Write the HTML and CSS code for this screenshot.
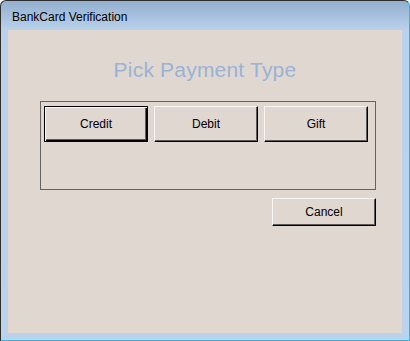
FILE: index.html
```html
<!DOCTYPE html>
<html>
<head>
<meta charset="utf-8">
<link rel="stylesheet" href="styles.css">
</head>
<body>
<div class="window">
  <div class="titlebar">BankCard Verification</div>
  <div class="client">
    <h1 class="heading">Pick Payment Type</h1>
    <div class="column">
      <div class="group">
        <button class="btn default">Credit</button>
        <button class="btn">Debit</button>
        <button class="btn">Gift</button>
      </div>
      <div class="actions">
        <button class="btn cancel">Cancel</button>
      </div>
    </div>
  </div>
</div>
</body>
</html>
```
FILE: styles.css
```css
html, body {
  margin: 0;
  padding: 0;
  background: #ffffff;
}
.window {
  width: 410px;
  height: 341px;
  box-sizing: border-box;
  border: 1px solid #2e2e2e;
  border-right-color: #2fb8de;
  border-bottom-color: #2fb8de;
  border-radius: 6px 6px 0 0;
  background: linear-gradient(to bottom, #93b0cf 0px, #b9d1ea 29px, #bad2eb 100%);
  padding: 0 7px 7px 7px;
  display: flex;
  flex-direction: column;
  font-family: "Liberation Sans", Arial, sans-serif;
}
.titlebar {
  height: 29px;
  box-sizing: border-box;
  padding: 9px 0 0 4px;
  font-size: 12px;
  line-height: 15px;
  color: #000;
}
.client {
  flex: 1;
  background: #dfd7d0;
  display: flex;
  flex-direction: column;
  align-items: center;
}
.heading {
  margin: 28px 0 0 0;
  font-size: 21px;
  line-height: 24px;
  font-weight: normal;
  color: #9ab3d3;
  letter-spacing: 0.2px;
  font-family: "Liberation Sans", Arial, sans-serif;
}
.column {
  align-self: flex-start;
  margin-left: 32px;
  width: 336px;
  margin-top: 19px;
  display: flex;
  flex-direction: column;
}
.group {
  height: 89px;
  box-sizing: border-box;
  border: 1px solid #646464;
  padding: 4px 3px;
  display: flex;
  align-items: flex-start;
  gap: 6px;
}
.btn {
  width: 104px;
  height: 36px;
  box-sizing: border-box;
  margin: 0;
  padding: 0;
  background: #dfd7d0;
  border: 1px solid;
  border-color: #f7f5f3 #000 #000 #f7f5f3;
  box-shadow: inset -1px -1px 0 #5e5a57;
  font-family: "Liberation Sans", Arial, sans-serif;
  font-size: 12px;
  color: #000;
}
.btn.default {
  border-color: #000;
  box-shadow: inset 1px 1px 0 #f7f5f3, inset -1px -1px 0 #000, inset -2px -2px 0 #5e5a57;
}
.actions {
  display: flex;
  justify-content: flex-end;
  margin-top: 8px;
}
.btn.cancel {
  width: 104px;
  height: 28px;
}
```
